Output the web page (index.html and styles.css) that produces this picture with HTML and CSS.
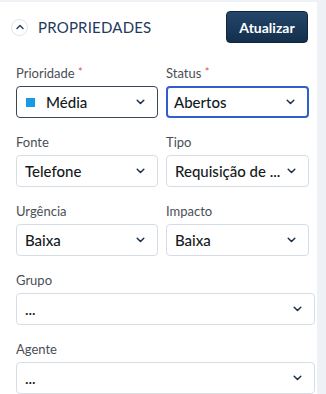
FILE: index.html
```html
<!DOCTYPE html>
<html lang="pt-BR">
<head>
    <meta charset="UTF-8">
    <meta name="viewport" content="width=device-width, initial-scale=1.0">
    <title>Propriedades</title>
    <link rel="stylesheet" href="styles.css">
</head>
<body>
    <div class="panel">
        <div class="panel-head">
            <div class="panel-title">
                <span class="toggle">
                    <svg width="8" height="6" viewBox="0 0 8 6"><path d="M1 4.5 L4 1.5 L7 4.5" fill="none" stroke="#1f3a5c" stroke-width="1.4" stroke-linecap="round" stroke-linejoin="round"/></svg>
                </span>
                PROPRIEDADES
            </div>
            <button class="btn-update">Atualizar</button>
        </div>

        <div class="fields">
            <div class="field">
                <label>Prioridade <span class="req">*</span></label>
                <div class="select select-dark">
                    <span class="dot"></span><span class="value">Média</span>
                    <svg class="chev" width="9" height="6" viewBox="0 0 9 6"><path d="M1.2 1.3 L4.5 4.5 L7.8 1.3" fill="none" stroke="#1b2e4a" stroke-width="1.5" stroke-linecap="round" stroke-linejoin="round"/></svg>
                </div>
            </div>
            <div class="field">
                <label>Status <span class="req">*</span></label>
                <div class="select select-focus">
                    <span class="value">Abertos</span>
                    <svg class="chev" width="9" height="6" viewBox="0 0 9 6"><path d="M1.2 1.3 L4.5 4.5 L7.8 1.3" fill="none" stroke="#1b2e4a" stroke-width="1.5" stroke-linecap="round" stroke-linejoin="round"/></svg>
                </div>
            </div>
            <div class="field">
                <label>Fonte</label>
                <div class="select">
                    <span class="value">Telefone</span>
                    <svg class="chev" width="9" height="6" viewBox="0 0 9 6"><path d="M1.2 1.3 L4.5 4.5 L7.8 1.3" fill="none" stroke="#1b2e4a" stroke-width="1.5" stroke-linecap="round" stroke-linejoin="round"/></svg>
                </div>
            </div>
            <div class="field">
                <label>Tipo</label>
                <div class="select">
                    <span class="value">Requisição de ...</span>
                    <svg class="chev" width="9" height="6" viewBox="0 0 9 6"><path d="M1.2 1.3 L4.5 4.5 L7.8 1.3" fill="none" stroke="#1b2e4a" stroke-width="1.5" stroke-linecap="round" stroke-linejoin="round"/></svg>
                </div>
            </div>
            <div class="field">
                <label>Urgência</label>
                <div class="select">
                    <span class="value">Baixa</span>
                    <svg class="chev" width="9" height="6" viewBox="0 0 9 6"><path d="M1.2 1.3 L4.5 4.5 L7.8 1.3" fill="none" stroke="#1b2e4a" stroke-width="1.5" stroke-linecap="round" stroke-linejoin="round"/></svg>
                </div>
            </div>
            <div class="field">
                <label>Impacto</label>
                <div class="select">
                    <span class="value">Baixa</span>
                    <svg class="chev" width="9" height="6" viewBox="0 0 9 6"><path d="M1.2 1.3 L4.5 4.5 L7.8 1.3" fill="none" stroke="#1b2e4a" stroke-width="1.5" stroke-linecap="round" stroke-linejoin="round"/></svg>
                </div>
            </div>
            <div class="field field-wide">
                <label>Grupo</label>
                <div class="select">
                    <span class="value">...</span>
                    <svg class="chev" width="9" height="6" viewBox="0 0 9 6"><path d="M1.2 1.3 L4.5 4.5 L7.8 1.3" fill="none" stroke="#1b2e4a" stroke-width="1.5" stroke-linecap="round" stroke-linejoin="round"/></svg>
                </div>
            </div>
            <div class="field field-wide">
                <label>Agente</label>
                <div class="select">
                    <span class="value">...</span>
                    <svg class="chev" width="9" height="6" viewBox="0 0 9 6"><path d="M1.2 1.3 L4.5 4.5 L7.8 1.3" fill="none" stroke="#1b2e4a" stroke-width="1.5" stroke-linecap="round" stroke-linejoin="round"/></svg>
                </div>
            </div>
        </div>
    </div>
</body>
</html>
```

FILE: styles.css
```css
* { margin: 0; padding: 0; box-sizing: border-box; font-family: Lato, 'Noto Sans', sans-serif; }
body { background: #eef1f6; overflow: hidden; }

.panel { width: 317px; height: 392px; margin-top: 2px; background: #fff; padding: 9px 0 0 16px; }

.panel-head { display: flex; align-items: center; justify-content: space-between; padding-right: 9px; }
.panel-title { display: flex; align-items: center; gap: 10px; margin-left: -5px; font-size: 15px; color: #223a5e; letter-spacing: 0.2px; }
.toggle {
    width: 17px; height: 17px; border: 1px solid #dfe4ec; border-radius: 50%;
    display: flex; align-items: center; justify-content: center;
}
.toggle svg { margin-top: -1px; }

.btn-update {
    width: 82px; height: 32px; border: 1px solid #0f263e; border-radius: 4px;
    background: linear-gradient(#24466a, #132f4c); color: #fff;
    font-size: 14px; font-weight: 700; cursor: pointer;
}

.fields { display: grid; grid-template-columns: 142px 143px; column-gap: 8px; row-gap: 16px; margin-top: 21px; }
.field-wide { grid-column: 1 / 3; width: 299px; }
.field label { display: block; font-size: 13px; line-height: 16px; color: #4a4f57; margin-bottom: 5px; }
.req { color: #e0505a; font-size: 11px; vertical-align: 2px; }

.select {
    height: 32px; border: 1px solid #d7dde5; border-radius: 4px;
    display: flex; align-items: center; padding: 0 12px 0 8px;
    font-size: 15px; font-weight: 500; color: #141a22;
}
.select .value { flex: 1; white-space: nowrap; overflow: hidden; }
.select-dark { border-color: #3b4656; }
.select-focus { border: 2px solid #2f5fcf; padding-left: 6px; }
.dot { width: 9px; height: 9px; background: #179be6; margin: 0 11px 0 1px; }
.chev { flex-shrink: 0; }
```
